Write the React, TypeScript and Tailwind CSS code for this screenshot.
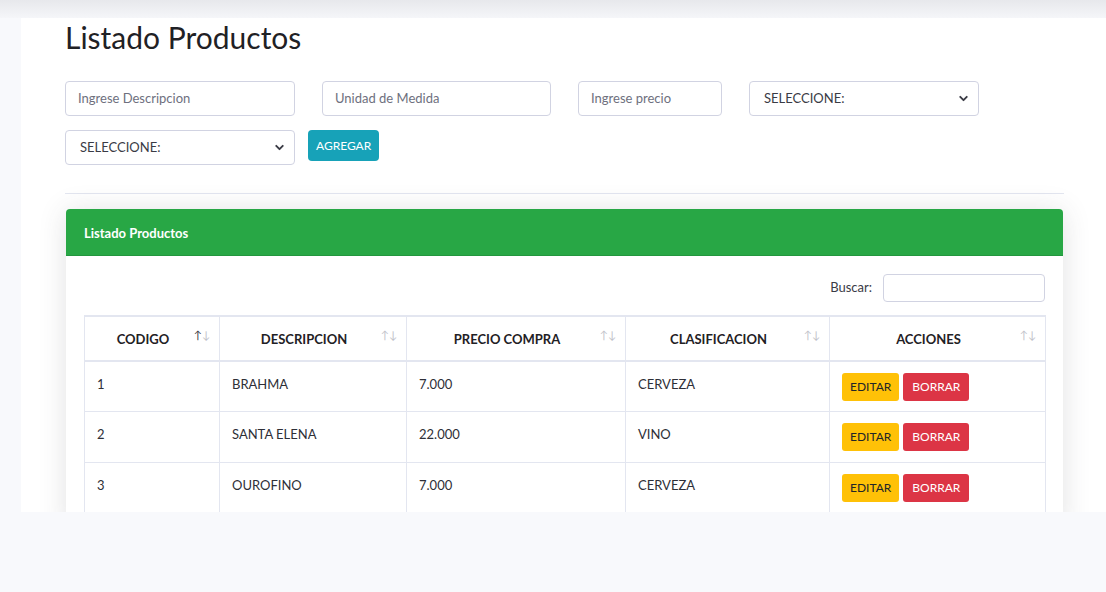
import { ChevronDown } from "lucide-react";

const productos = [
  { codigo: 1, descripcion: "BRAHMA", precio: "7.000", clasificacion: "CERVEZA" },
  { codigo: 2, descripcion: "SANTA ELENA", precio: "22.000", clasificacion: "VINO" },
  { codigo: 3, descripcion: "OUROFINO", precio: "7.000", clasificacion: "CERVEZA" },
];

const columnas = [
  { label: "CODIGO", width: "w-[135px]", asc: true },
  { label: "DESCRIPCION", width: "w-[187px]", asc: false },
  { label: "PRECIO COMPRA", width: "w-[219px]", asc: false },
  { label: "CLASIFICACION", width: "w-[204px]", asc: false },
  { label: "ACCIONES", width: "w-[216px]", asc: false },
];

const Select = ({ width }: { width: string }) => (
  <div
    className={`${width} h-[35px] flex items-center justify-between border border-[#d1d3e2] rounded-[4px] bg-white pl-[14px] pr-[8px] text-[13px] text-[#3a3b45]`}
  >
    <span>SELECCIONE:</span>
    <ChevronDown className="w-[13px] h-[13px] text-[#3a3b45]" strokeWidth={3.5} />
  </div>
);

export default function App() {
  return (
    <div className="min-h-[592px] bg-[#f8f9fc] font-['Lato',sans-serif]">
      {/* topbar shadow */}
      <div className="h-[18px] bg-gradient-to-b from-[#e7e8ec] to-[#f5f6f9]" />

      {/* contenido */}
      <div className="ml-[21px] h-[494px] overflow-hidden bg-white pl-[44px] pr-[42px]">
        <h1 className="text-[30px] leading-[38px] text-[#1f2125]">Listado Productos</h1>

        {/* formulario */}
        <div className="mt-[25px] flex items-center">
          <div className="w-[230px] h-[35px] flex items-center border border-[#d1d3e2] rounded-[4px] px-3 text-[13px] text-[#6e707e]">
            Ingrese Descripcion
          </div>
          <div className="ml-[27px] w-[229px] h-[35px] flex items-center border border-[#d1d3e2] rounded-[4px] px-3 text-[13px] text-[#6e707e]">
            Unidad de Medida
          </div>
          <div className="ml-[27px] w-[144px] h-[35px] flex items-center border border-[#d1d3e2] rounded-[4px] px-3 text-[13px] text-[#6e707e]">
            Ingrese precio
          </div>
          <div className="ml-[27px]">
            <Select width="w-[230px]" />
          </div>
        </div>
        <div className="mt-[14px] flex items-start">
          <Select width="w-[230px]" />
          <button className="ml-[13px] h-[31px] px-[8px] rounded-[4px] bg-[#17a2b8] text-white text-[12px]">
            AGREGAR
          </button>
        </div>

        <hr className="mt-[28px] border-t border-[#e3e6f0]" />

        {/* card */}
        <div className="mt-[15px] ml-px w-[997px] rounded-[4px] bg-white shadow-[0_0.15rem_1.75rem_0_rgba(58,59,69,0.15)]">
          <div className="h-[47px] flex items-center px-[18px] pt-[3px] rounded-t-[4px] bg-[#28a745] border-b border-[#23963e] text-white text-[13px] font-bold">
            Listado Productos
          </div>
          <div className="px-[18px] pt-[18px] pb-4">
            <div className="flex items-center justify-end text-[13px] text-[#3a3b45]">
              <span>Buscar:</span>
              <div className="ml-[11px] w-[162px] h-[28px] border border-[#d1d3e2] rounded-[4px]" />
            </div>

            <table className="mt-[13px] w-[961px] border-collapse table-fixed text-[13px] text-[#2e2f37]">
              <thead>
                <tr>
                  {columnas.map((c) => (
                    <th
                      key={c.label}
                      className={`${c.width} relative h-[45px] border border-[#e3e6f0] border-t-2 border-b-2 pl-3 pr-[30px] pt-[2px] text-center font-bold text-[#1f2125]`}
                    >
                      {c.label}
                      <span className="absolute top-[12px] right-[9px] text-[11px] font-normal leading-none text-[#858796]">
                        <span className={c.asc ? "text-[#3a3b45]" : "opacity-50"}>↑</span>
                        <span className="opacity-50">↓</span>
                      </span>
                    </th>
                  ))}
                </tr>
              </thead>
              <tbody>
                {productos.map((p) => (
                  <tr key={p.codigo}>
                    <td className="h-[50.5px] border border-[#e3e6f0] px-3 pt-[13px] align-top">{p.codigo}</td>
                    <td className="border border-[#e3e6f0] px-3 pt-[13px] align-top">{p.descripcion}</td>
                    <td className="border border-[#e3e6f0] px-3 pt-[13px] align-top">{p.precio}</td>
                    <td className="border border-[#e3e6f0] px-3 pt-[13px] align-top">{p.clasificacion}</td>
                    <td className="border border-[#e3e6f0] px-3 pt-[11px] align-top">
                      <div className="flex gap-[4px]">
                        <button className="h-[28px] px-[8px] rounded-[3px] bg-[#ffc107] text-[12px] text-[#212529]">
                          EDITAR
                        </button>
                        <button className="h-[28px] px-[9px] rounded-[3px] bg-[#dc3545] text-[12px] text-white">
                          BORRAR
                        </button>
                      </div>
                    </td>
                  </tr>
                ))}
              </tbody>
            </table>
          </div>
        </div>
      </div>
    </div>
  );
}
